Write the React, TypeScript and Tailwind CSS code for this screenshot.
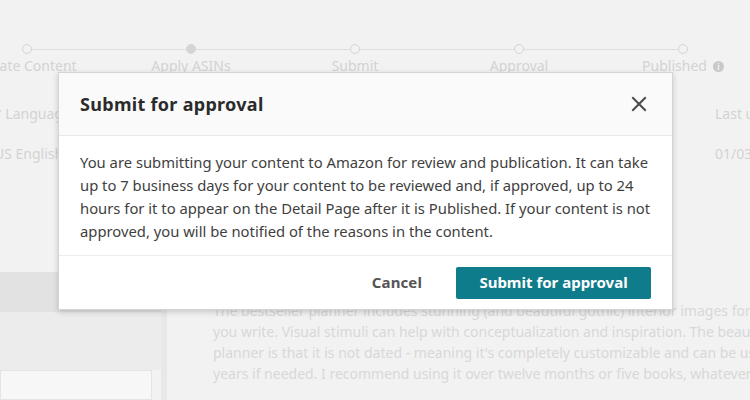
import React from "react";

const steps = ["Create Content", "Apply ASINs", "Submit", "Approval", "Published"];

export default function App() {
  return (
    <div className="relative w-[750px] h-[400px] overflow-hidden bg-[#f2f2f2] font-['Noto_Sans',sans-serif]">
      {/* faded background page */}
      <div className="flex flex-col text-[#d3d3d3]">
        <div className="flex ml-[-55px] pt-[44px]">
          {steps.map((s, i) => (
            <div key={s} className="relative w-[164px] shrink-0 flex flex-col items-center">
              <div className="flex items-center w-full h-[10px]">
                <div className={`flex-1 h-px ${i === 0 ? "bg-transparent" : "bg-[#dedede]"}`} />
                <div className={`w-[10px] h-[10px] rounded-full border border-[#d5d5d5] ${i === 1 ? "bg-[#d5d5d5]" : "bg-[#f2f2f2]"}`} />
                <div className={`flex-1 h-px ${i === 4 ? "bg-transparent" : "bg-[#dedede]"}`} />
              </div>
              <div className="mt-[3px] text-[14px] leading-[18px] whitespace-nowrap flex items-center gap-[6px]">
                {s}
                {i === 4 && (
                  <span className="w-[11px] h-[11px] rounded-full bg-[#c9c9c9] text-[#f2f2f2] text-[8px] leading-[11px] font-bold text-center">i</span>
                )}
              </div>
            </div>
          ))}
        </div>
        <div className="flex justify-between mt-[29px] text-[14px] leading-[20px]">
          <div className="ml-[-6px] flex flex-col gap-[20px]">
            <span>* Language</span>
            <span>US English</span>
          </div>
          <div className="w-[35px] flex flex-col gap-[20px] whitespace-nowrap">
            <span>Last updated</span>
            <span>01/03/2023</span>
          </div>
        </div>
        <div className="flex mt-[108px]">
          <div className="w-[161px] shrink-0 flex flex-col">
            <div className="h-[40px] bg-[#e2e2e2]" />
            <div className="h-[58px] bg-[#ececec]" />
            <div className="h-[30px] bg-[#f7f7f7] border border-[#e4e4e4] w-[152px]" />
          </div>
          <div className="w-[6px] shrink-0 bg-[#e8e8e8]" />
          <div className="pl-[46px] pt-[28px] text-[14px] leading-[21px] whitespace-nowrap text-[#d8d8d8]">
            <div>The bestseller planner includes stunning (and beautiful gothic) interior images for you</div>
            <div>you write. Visual stimuli can help with conceptualization and inspiration. The beauty</div>
            <div>planner is that it is not dated - meaning it's completely customizable and can be used</div>
            <div>years if needed. I recommend using it over twelve months or five books, whatever else</div>
          </div>
        </div>
      </div>

      {/* modal */}
      <div className="absolute left-[58px] top-[72px] w-[615px] bg-white border border-[#d4d4d4] shadow-[0_2px_6px_rgba(0,0,0,0.18)]">
        <div className="h-[63px] bg-[#fafafa] border-b border-[#e8e8e8] flex items-center justify-between pl-[21px] pr-[24px]">
          <h2 className="text-[18px] font-bold text-[#2b2b2b] tracking-[0.3px]">Submit for approval</h2>
          <svg width="16" height="16" viewBox="0 0 16 16" className="mr-[1px]">
            <path d="M2 2 L14 14 M14 2 L2 14" stroke="#4a4a4a" strokeWidth="2" strokeLinecap="square" />
          </svg>
        </div>
        <div className="pl-[21px] pr-[18px] pt-[15px] pb-[12px] text-[14.8px] leading-[23px] text-[#3f3f3f]">
          You are submitting your content to Amazon for review and publication. It can take up to 7 business days for your content to be reviewed and, if approved, up to 24 hours for it to appear on the Detail Page after it is Published. If your content is not approved, you will be notified of the reasons in the content.
        </div>
        <div className="border-t border-[#ececec] h-[54px] flex items-center justify-end pr-[21px] gap-[18px]">
          <button className="px-[16px] h-[32px] text-[15px] font-bold text-[#555] tracking-[0.1px]">Cancel</button>
          <button className="w-[195px] h-[32px] rounded-[2px] bg-[#0f7c8b] text-white text-[15px] font-bold">Submit for approval</button>
        </div>
      </div>
    </div>
  );
}
